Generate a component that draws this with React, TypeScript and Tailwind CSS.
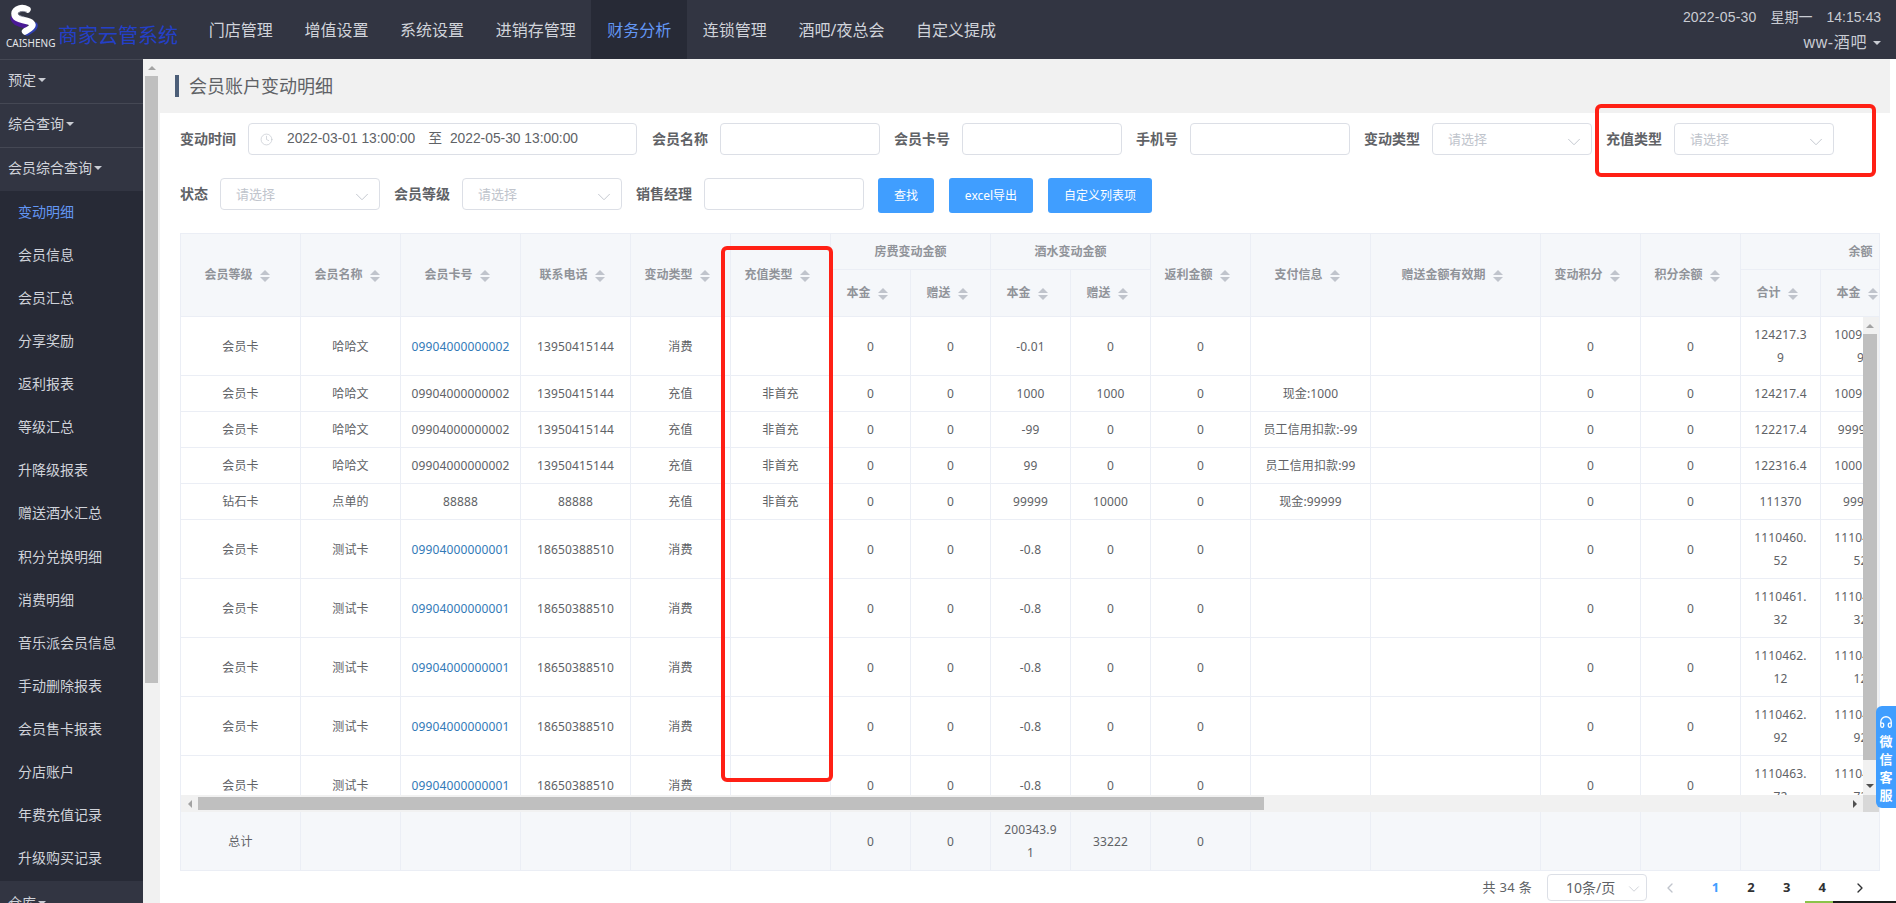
import { ChevronDown, ChevronLeft, ChevronRight, Clock, Headphones } from "lucide-react";

const font = "font-['Noto_Sans','Noto_Sans_CJK_SC',sans-serif]";

const navItems = ["门店管理", "增值设置", "系统设置", "进销存管理", "财务分析", "连锁管理", "酒吧/夜总会", "自定义提成"];
const sideItems = [
  "变动明细",
  "会员信息",
  "会员汇总",
  "分享奖励",
  "返利报表",
  "等级汇总",
  "升降级报表",
  "赠送酒水汇总",
  "积分兑换明细",
  "消费明细",
  "音乐派会员信息",
  "手动删除报表",
  "会员售卡报表",
  "分店账户",
  "年费充值记录",
  "升级购买记录",
];
const colWidths = [120, 100, 120, 110, 100, 100, 80, 80, 80, 80, 100, 120, 170, 100, 100, 80, 80, 80];

interface IRow {
  level: string;
  name: string;
  card: string;
  link: boolean;
  phone: string;
  type: string;
  charge: string;
  drink: string;
  gift: string;
  pay: string;
  total: string;
  base: string;
}

const rows: IRow[] = [
  { level: "会员卡", name: "哈哈文", card: "09904000000002", link: true, phone: "13950415144", type: "消费", charge: "", drink: "-0.01", gift: "0", pay: "", total: "124217.3\n9", base: "100917.3\n9" },
  { level: "会员卡", name: "哈哈文", card: "09904000000002", link: false, phone: "13950415144", type: "充值", charge: "非首充", drink: "1000", gift: "1000", pay: "现金:1000", total: "124217.4", base: "100917.4" },
  { level: "会员卡", name: "哈哈文", card: "09904000000002", link: false, phone: "13950415144", type: "充值", charge: "非首充", drink: "-99", gift: "0", pay: "员工信用扣款:-99", total: "122217.4", base: "99997.4" },
  { level: "会员卡", name: "哈哈文", card: "09904000000002", link: false, phone: "13950415144", type: "充值", charge: "非首充", drink: "99", gift: "0", pay: "员工信用扣款:99", total: "122316.4", base: "100016.4" },
  { level: "钻石卡", name: "点单的", card: "88888", link: false, phone: "88888", type: "充值", charge: "非首充", drink: "99999", gift: "10000", pay: "现金:99999", total: "111370", base: "99999" },
  ...["52", "32", "12", "92", "72"].map((dec, i) => ({
    level: "会员卡",
    name: "测试卡",
    card: "09904000000001",
    link: true,
    phone: "18650388510",
    type: "消费",
    charge: "",
    drink: "-0.8",
    gift: "0",
    pay: "",
    total: `${["1110460.", "1110461.", "1110462.", "1110462.", "1110463."][i]}\n${dec}`,
    base: `${["1110460.", "1110461.", "1110462.", "1110462.", "1110463."][i]}\n${dec}`,
  })),
];

const Colgroup = () => (
  <colgroup>
    {colWidths.map((w, i) => (
      <col key={i} style={{ width: w }} />
    ))}
  </colgroup>
);

const SortIcon = () => (
  <span className="inline-flex w-6 flex-col items-center gap-[2px] align-middle">
    <span className="h-0 w-0 border-x-[5px] border-b-[5px] border-x-transparent border-b-[#c0c4cc]" />
    <span className="h-0 w-0 border-x-[5px] border-t-[5px] border-x-transparent border-t-[#c0c4cc]" />
  </span>
);

const Th = ({ label, sort = true, rowSpan, colSpan }: { label: string; sort?: boolean; rowSpan?: number; colSpan?: number }) => (
  <th
    rowSpan={rowSpan}
    colSpan={colSpan}
    className="border-r border-b border-[#ebeef5] bg-[#f5f7fa] text-center text-xs font-bold whitespace-nowrap text-[#909399]"
  >
    {label}
    {sort && <SortIcon />}
  </th>
);

const Td = ({ children, link }: { children?: React.ReactNode; link?: boolean }) => (
  <td
    className={`border-r border-b border-[#ebeef5] py-[6px] text-center text-xs leading-[23px] tracking-[0.14px] whitespace-pre-line ${
      link ? "text-[#337ab7]" : "text-[#606266]"
    }`}
  >
    {children}
  </td>
);

const Label = ({ children }: { children: React.ReactNode }) => (
  <span className="mr-3 text-sm font-bold whitespace-nowrap text-[#606266]">{children}</span>
);

const TextInput = () => (
  <div className="mr-[14px] h-8 w-40 rounded border border-[#dcdfe6] bg-white" />
);

const SelectBox = ({ last }: { last?: boolean }) => (
  <div className={`flex h-8 w-40 items-center justify-between rounded border border-[#dcdfe6] bg-white pr-[6px] pl-[15px] ${last ? "" : "mr-[14px]"}`}>
    <span className="text-[13px] text-[#c0c4cc]">请选择</span>
    <ChevronDown size={22} strokeWidth={1} className="mt-[6px] text-[#c0c4cc]" />
  </div>
);

const BlueButton = ({ children, width }: { children: React.ReactNode; width: string }) => (
  <button className={`mr-[15px] h-[35px] rounded-[3px] bg-[#409eff] text-xs text-white ${width}`}>{children}</button>
);

const Caret = ({ color = "border-t-[#c9ccd3]", gap = "ml-[2px]" }: { color?: string; gap?: string }) => (
  <span className={`inline-block h-0 w-0 border-x-[4px] border-t-[4px] border-x-transparent align-middle ${gap} ${color}`} />
);

const Logo = () => (
  <svg width="48" height="40" viewBox="0 0 48 40" className="absolute top-0 left-0">
    <g fill="none" strokeLinecap="round" strokeLinejoin="round">
      <path d="M14 18.500C15 22 19 23.500 24 24.500" stroke="#4a1a96" strokeWidth="7" />
      <path d="M35 25C35.500 28.500 31 30.500 27 33" stroke="#2f3fb0" strokeWidth="5.500" />
      <path d="M27.500 9.500C22 6.500 15 8.500 14.500 13.500C14.500 18 18.500 19 23 20C28 21 32 22 32.500 25C32.500 27.500 28.500 29.500 25 31.500" stroke="#ffffff" strokeWidth="6.500" />
      <path d="M26.500 12C22.500 10.500 18.800 11.800 18.500 14C18.500 15.500 20.500 16 24 16.800" stroke="#8b8ea0" strokeWidth="0.800" />
    </g>
  </svg>
);

const HScrollbar = () => (
  <div className="flex h-[17px] items-center bg-[#f1f1f1]">
    <div className="flex w-[17px] justify-center">
      <span className="h-0 w-0 border-y-[4px] border-r-[4px] border-y-transparent border-r-[#a3a3a3]" />
    </div>
    <div className="h-[13px] w-[1066px] bg-[#bfbfbf]" />
    <div className="flex-1" />
    <div className="flex w-[17px] justify-center">
      <span className="h-0 w-0 border-y-[4px] border-l-[4px] border-y-transparent border-l-[#505050]" />
    </div>
    <div className="h-full w-[16px] bg-[#d8d8d8]" />
  </div>
);

const App = () => {
  return (
    <div className={`${font} flex h-screen flex-col overflow-hidden bg-white`}>
      <header className="flex h-[59px] shrink-0 items-center bg-[#323542]">
        <div className="relative h-[59px] w-[58px] shrink-0">
          <Logo />
          <span className="absolute top-[36px] left-[6px] text-[10px] leading-[14px] text-[#e4e6ea]">CAISHENG</span>
        </div>
        <span className="mt-3 w-[135px] shrink-0 text-[20px] leading-none whitespace-nowrap text-[#2440c8]">商家云管系统</span>
        <nav className="flex h-full">
          {navItems.map((item) => (
            <div
              key={item}
              className={`flex items-center px-[15.8px] text-base whitespace-nowrap ${
                item === "财务分析" ? "bg-[#272a36] text-[#6397f5]" : "text-[#d0d3da]"
              }`}
            >
              {item}
            </div>
          ))}
        </nav>
        <div className="ml-auto flex flex-col items-end pr-[15px] font-['Liberation_Sans','Noto_Sans_CJK_SC',sans-serif] text-[#c9ccd3]">
          <div className="flex gap-[14px] text-sm leading-[26px]">
            <span className="tracking-[0.2px]">2022-05-30</span>
            <span>星期一</span>
            <span>14:15:43</span>
          </div>
          <div className="flex items-center text-base leading-[26px] tracking-[0.6px]">
            ww-酒吧
            <Caret gap="ml-[6px]" />
          </div>
        </div>
      </header>

      <div className="flex min-h-0 flex-1">
        <aside className="w-[143px] shrink-0 overflow-hidden bg-[#272a36] text-sm text-[#d0d3da]">
          {["预定", "综合查询", "会员综合查询"].map((g) => (
            <div key={g} className="flex h-11 items-center border-t border-[#454854] bg-[#323542] pb-[3px] pl-2">
              {g}
              <Caret />
            </div>
          ))}
          {sideItems.map((s, i) => (
            <div
              key={s}
              className={`flex h-[43.125px] items-center pb-[2px] pl-[18px] whitespace-nowrap ${i === 0 ? "text-[#6397f5]" : ""}`}
            >
              {s}
            </div>
          ))}
          <div className="flex h-11 items-center bg-[#323542] pl-2">
            仓库
            <Caret />
          </div>
        </aside>

        <div className="flex w-[17px] shrink-0 flex-col bg-[#f1f1f1] pr-[2px] pl-[2px]">
          <div className="flex h-[17px] shrink-0 items-center justify-center">
            <span className="h-0 w-0 border-x-[4px] border-b-[4px] border-x-transparent border-b-[#a3a3a3]" />
          </div>
          <div className="h-[607px] bg-[#bfbfbf]" />
        </div>

        <main className="relative flex w-[1730px] shrink-0 flex-col text-sm">
          <div className="flex h-[54px] shrink-0 items-center bg-[#f1f1f1] pl-[15px]">
            <span className="h-[22px] w-1 bg-[#4c5e78]" />
            <span className="ml-[10px] text-lg leading-none text-[#606266]">会员账户变动明细</span>
          </div>

          <div className="flex flex-col px-5 pt-[10px]">
            <div className="flex items-center">
              <Label>变动时间</Label>
              <div className="mr-[15px] flex h-8 w-[389px] items-center rounded border border-[#dcdfe6] bg-white pl-[11px] font-['Liberation_Sans','Noto_Sans_CJK_SC',sans-serif] text-[13.8px] text-[#606266]">
                <Clock size={13} strokeWidth={1.2} className="text-[#c0c4cc]" />
                <span className="ml-[14px]">2022-03-01 13:00:00</span>
                <span className="mr-[8px] ml-[13px]">至</span>
                <span>2022-05-30 13:00:00</span>
              </div>
              <Label>会员名称</Label>
              <TextInput />
              <Label>会员卡号</Label>
              <TextInput />
              <Label>手机号</Label>
              <TextInput />
              <Label>变动类型</Label>
              <SelectBox />
              <Label>充值类型</Label>
              <SelectBox last />
            </div>
            <div className="mt-[23px] flex items-start">
              <div className="flex h-8 items-center">
                <Label>状态</Label>
                <SelectBox />
                <Label>会员等级</Label>
                <SelectBox />
                <Label>销售经理</Label>
                <TextInput />
              </div>
              <BlueButton width="w-14">查找</BlueButton>
              <BlueButton width="w-[84px]">excel导出</BlueButton>
              <BlueButton width="w-[104px]">自定义列表项</BlueButton>
            </div>

            <div className="mt-5 w-[1700px] overflow-hidden border-x border-t border-[#ebeef5]">
              <table className="w-[1800px] table-fixed border-separate border-spacing-0">
                <Colgroup />
                <thead>
                  <tr className="h-9">
                    <Th label="会员等级" rowSpan={2} />
                    <Th label="会员名称" rowSpan={2} />
                    <Th label="会员卡号" rowSpan={2} />
                    <Th label="联系电话" rowSpan={2} />
                    <Th label="变动类型" rowSpan={2} />
                    <Th label="充值类型" rowSpan={2} />
                    <Th label="房费变动金额" sort={false} colSpan={2} />
                    <Th label="酒水变动金额" sort={false} colSpan={2} />
                    <Th label="返利金额" rowSpan={2} />
                    <Th label="支付信息" rowSpan={2} />
                    <Th label="赠送金额有效期" rowSpan={2} />
                    <Th label="变动积分" rowSpan={2} />
                    <Th label="积分余额" rowSpan={2} />
                    <Th label="余额" sort={false} colSpan={3} />
                  </tr>
                  <tr className="h-[47px]">
                    <Th label="本金" />
                    <Th label="赠送" />
                    <Th label="本金" />
                    <Th label="赠送" />
                    <Th label="合计" />
                    <Th label="本金" />
                    <Th label="赠送" />
                  </tr>
                </thead>
              </table>

              <div className="relative h-[478px] overflow-hidden">
                <table className="w-[1800px] table-fixed border-separate border-spacing-0">
                  <Colgroup />
                  <tbody>
                    {rows.map((r, i) => (
                      <tr key={i}>
                        <Td>{r.level}</Td>
                        <Td>{r.name}</Td>
                        <Td link={r.link}>{r.card}</Td>
                        <Td>{r.phone}</Td>
                        <Td>{r.type}</Td>
                        <Td>{r.charge}</Td>
                        <Td>0</Td>
                        <Td>0</Td>
                        <Td>{r.drink}</Td>
                        <Td>{r.gift}</Td>
                        <Td>0</Td>
                        <Td>{r.pay}</Td>
                        <Td />
                        <Td>0</Td>
                        <Td>0</Td>
                        <Td>{r.total}</Td>
                        <Td>{r.base}</Td>
                        <Td>0</Td>
                      </tr>
                    ))}
                  </tbody>
                </table>
                <div className="absolute top-0 right-0 flex h-full w-[16px] flex-col bg-[#f1f1f1] pr-[2px]">
                  <div className="flex h-[17px] shrink-0 items-center justify-center">
                    <span className="h-0 w-0 border-x-[4px] border-b-[4px] border-x-transparent border-b-[#a3a3a3]" />
                  </div>
                  <div className="h-[426px] bg-[#bfbfbf]" />
                  <div className="flex flex-1 items-end justify-center pb-[7px]">
                    <span className="h-0 w-0 border-x-[4px] border-t-[4px] border-x-transparent border-t-[#505050]" />
                  </div>
                </div>
              </div>

              <HScrollbar />

              <table className="w-[1800px] table-fixed border-separate border-spacing-0">
                <Colgroup />
                <tbody>
                  <tr className="h-[58px] bg-[#f5f7fa]">
                    <Td>总计</Td>
                    <Td />
                    <Td />
                    <Td />
                    <Td />
                    <Td />
                    <Td>0</Td>
                    <Td>0</Td>
                    <Td>{"200343.9\n1"}</Td>
                    <Td>33222</Td>
                    <Td>0</Td>
                    <Td />
                    <Td />
                    <Td />
                    <Td />
                    <Td />
                    <Td />
                    <Td />
                  </tr>
                </tbody>
              </table>
            </div>

            <div className="mt-[3px] flex h-[27px] w-[1700px] items-center justify-end text-[13px] text-[#606266]">
              <span className="tracking-[0.3px]">共 34 条</span>
              <div className="mr-[15px] ml-[15px] flex h-[27px] w-[100px] items-center justify-between rounded border border-[#dcdfe6] pr-[3px] pl-[18px]">
                <span className="text-sm">10条/页</span>
                <ChevronDown size={18} strokeWidth={1} className="mt-[2px] text-[#c0c4cc]" />
              </div>
              <div className="flex w-[35.6px] justify-start">
                <ChevronLeft size={16} className="text-[#c0c4cc]" />
              </div>
              {["1", "2", "3", "4"].map((p) => (
                <span key={p} className={`w-[35.6px] text-center font-bold ${p === "1" ? "text-[#409eff]" : "text-[#303133]"}`}>
                  {p}
                </span>
              ))}
              <div className="flex w-10 justify-center">
                <ChevronRight size={16} className="text-[#303133]" />
              </div>
            </div>
          </div>

          {/* 红框标注 */}
          <div className="absolute top-[45px] left-[1435px] h-[73px] w-[281px] rounded-md border-[4px] border-[#ff2015]" />
          <div className="absolute top-[187px] left-[561px] h-[536px] w-[112px] rounded-md border-[4px] border-[#ff2015]" />
        </main>
      </div>

      <div className="absolute top-[706px] right-0 flex h-[102px] w-5 flex-col items-center rounded-l-md bg-[#409eff] pt-[9px] text-[13px] leading-[18px] font-bold text-white">
        <Headphones size={14} strokeWidth={2.2} className="mb-[3px] shrink-0" />
        <span>微</span>
        <span>信</span>
        <span>客</span>
        <span>服</span>
      </div>

      <div className="absolute right-0 bottom-0 flex h-[2px]">
        <div className="w-7 bg-[#8bc34a]" />
        <div className="w-[63px] bg-[#1c1c1c]" />
      </div>
    </div>
  );
};

export default App;
